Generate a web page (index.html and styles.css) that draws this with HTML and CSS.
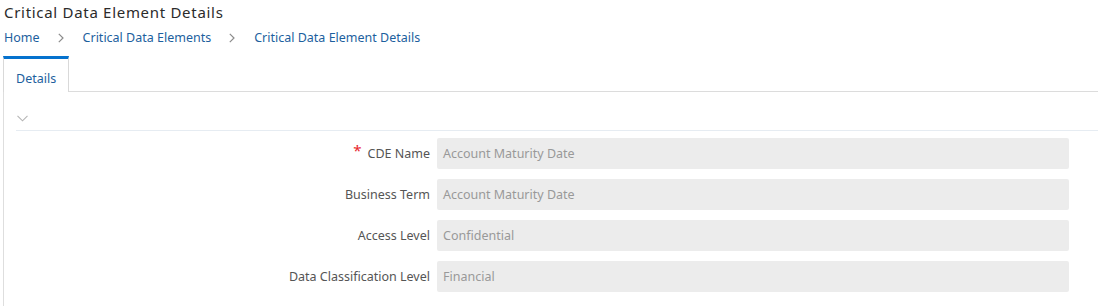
FILE: index.html
```html
<!DOCTYPE html>
<html>
<head>
<meta charset="utf-8">
<link rel="stylesheet" href="styles.css">
</head>
<body>
<div class="page">
  <h1 class="title">Critical Data Element Details</h1>
  <nav class="crumbs">
    <a class="crumb">Home</a>
    <svg class="sep" width="6" height="10" viewBox="0 0 6 10"><path d="M0.8 0.8 L5 5 L0.8 9.2" fill="none" stroke="#8c8c8c" stroke-width="1.2"/></svg>
    <a class="crumb">Critical Data Elements</a>
    <svg class="sep" width="6" height="10" viewBox="0 0 6 10"><path d="M0.8 0.8 L5 5 L0.8 9.2" fill="none" stroke="#8c8c8c" stroke-width="1.2"/></svg>
    <a class="crumb">Critical Data Element Details</a>
  </nav>
  <div class="tabbar">
    <div class="tab">Details</div>
    <div class="tabfill"></div>
  </div>
  <div class="panel">
    <div class="section-head">
      <svg class="chev" width="11" height="7" viewBox="0 0 11 7"><path d="M0.5 0.8 L5.5 5.8 L10.5 0.8" fill="none" stroke="#b5b5b5" stroke-width="1.1"/></svg>
    </div>
    <div class="form">
      <label class="label"><span class="req">*</span>CDE Name</label>
      <div class="field">Account Maturity Date</div>
      <label class="label">Business Term</label>
      <div class="field">Account Maturity Date</div>
      <label class="label">Access Level</label>
      <div class="field">Confidential</div>
      <label class="label">Data Classification Level</label>
      <div class="field">Financial</div>
    </div>
  </div>
</div>
</body>
</html>
```

FILE: styles.css
```css
html, body {
  margin: 0;
  padding: 0;
  background: #ffffff;
}
body {
  font-family: "Noto Sans", "Open Sans", sans-serif;
  width: 1098px;
  height: 308px;
  overflow: hidden;
}
.page {
  display: flex;
  flex-direction: column;
}
.title {
  margin: 0;
  padding: 1px 0 0 4px;
  height: 22px;
  font-size: 15px;
  line-height: 22px;
  font-weight: 400;
  letter-spacing: 0.7px;
  color: #2b2b2b;
}
.crumbs {
  display: flex;
  align-items: center;
  padding-left: 4px;
  height: 29px;
  font-size: 12.5px;
  line-height: 29px;
}
.crumb {
  color: #1d5f9e;
}
.sep {
  margin: 0 19px 0 18px;
}
.tabbar {
  display: flex;
  margin-top: 4px;
  margin-left: 3px;
  height: 36px;
}
.tab {
  width: 66px;
  box-sizing: border-box;
  border-top: 3px solid #0572ce;
  border-left: 1px solid #d9d9d9;
  border-right: 1px solid #d9d9d9;
  color: #1d5f9e;
  font-size: 12.5px;
  line-height: 40px;
  padding-left: 12px;
}
.tabfill {
  flex: 1;
  border-bottom: 1px solid #dcdcdc;
}
.panel {
  margin-left: 3px;
  border-left: 1px solid #dedede;
  height: 214px;
}
.section-head {
  margin-left: 12px;
  height: 38px;
  border-bottom: 1px solid #e6ecf2;
  display: flex;
  align-items: center;
}
.chev {
  margin-left: 1px;
  margin-top: 14px;
}
.form {
  display: grid;
  grid-template-columns: 414px 632px;
  grid-auto-rows: 31px;
  column-gap: 7px;
  row-gap: 10px;
  padding-top: 7px;
  margin-left: 12px;
}
.label {
  text-align: right;
  font-size: 12.5px;
  height: 31px;
  line-height: 31px;
  color: #555555;
}
.req {
  color: #e8242c;
  font-size: 15px;
  line-height: 0;
  margin-right: 6px;
  position: relative;
  top: -2px;
}
.field {
  height: 31px;
  background: #ececec;
  border-radius: 2px;
  padding-left: 6px;
  font-size: 12.5px;
  line-height: 31px;
  color: #999999;
}
```
